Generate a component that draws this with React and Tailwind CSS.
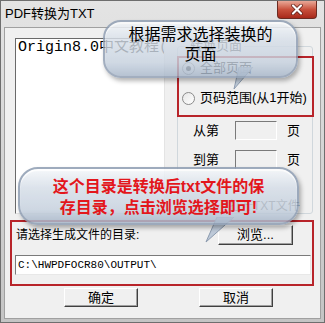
import React from "react";

const font = { fontFamily: '"Liberation Sans", "Noto Sans CJK SC", sans-serif' };

function Radio({ checked }) {
  return (
    <span className="relative w-[13px] h-[13px] rounded-full border border-[#8a8a8a] bg-gradient-to-br from-[#e6e6e6] to-white flex items-center justify-center shrink-0">
      {checked && <span className="w-[5px] h-[5px] rounded-full bg-[#222]" />}
    </span>
  );
}

function Btn({ children, className = "" }) {
  return (
    <div
      className={
        "flex items-center justify-center bg-[#f0f0f0] border border-t-white border-l-white border-b-[#404040] border-r-[#404040] shadow-[inset_-1px_-1px_0_#a0a0a0] text-[13px] text-black " +
        className
      }
    >
      {children}
    </div>
  );
}

export default function App() {
  return (
    <div
      className="relative w-[325px] h-[323px] overflow-hidden border border-[#6e6e6e] bg-gradient-to-b from-[#e4e4e4] via-[#d4d4d4] to-[#c4c4c4]"
      style={font}
    >
      {/* title bar */}
      <div className="h-[26px] flex items-center pl-[4px] text-[13px] text-black">PDF转换为TXT</div>
      <div className="absolute left-[276px] top-0 w-[40px] h-[18px] rounded-b-[4px] border border-t-0 border-[#6b2b22] bg-gradient-to-b from-[#e8a898] via-[#c8503c] to-[#a8281a] flex items-center justify-center">
        <svg width="12" height="11" viewBox="0 0 12 11">
          <path d="M2 1.5 L10 9.5 M10 1.5 L2 9.5" stroke="#5a1a12" strokeWidth="3.6" strokeLinecap="round" />
          <path d="M2 1.5 L10 9.5 M10 1.5 L2 9.5" stroke="#ffffff" strokeWidth="2.2" strokeLinecap="round" />
        </svg>
      </div>

      {/* client area */}
      <div className="mx-[3px] h-[292px] border border-[#a0a0a0] bg-[#f0f0f0] flex flex-col">
        {/* top row */}
        <div className="flex gap-[12px] ml-[10px] mt-[10px]">
          <div className="w-[150px] h-[176px] bg-white border border-t-[#6a6a6a] border-l-[#6a6a6a] border-b-[#e4e4e4] border-r-[#e4e4e4] pl-[2px] pt-[1px]">
            <div className="text-[15px] leading-[16px] text-black whitespace-nowrap overflow-hidden" style={{ fontFamily: '"Liberation Mono", "Noto Sans CJK SC", monospace' }}>
              Origin8.0中文教程(二维绘
            </div>
          </div>
          <div className="relative w-[136px] h-[168px] mt-[8px] border border-[#d0d7dc] rounded-[3px] flex flex-col">
            <div className="absolute left-[10px] top-[-9px] px-[2px] bg-[#f0f0f0] text-[13px] leading-[16px] text-[#222]">转换页面</div>
            <div className="flex items-center gap-[5px] ml-[4px] mt-[13px] h-[16px] text-[13px] text-black">
              <Radio checked />
              <span>全部页面</span>
            </div>
            <div className="flex items-center gap-[5px] ml-[4px] mt-[14px] h-[16px] text-[13px] text-black">
              <Radio />
              <span>页码范围(从1开始)</span>
            </div>
            <div className="flex items-center ml-[15px] mt-[15px] h-[19px] text-[13px] text-black">
              <span className="w-[42px]">从第</span>
              <span className="w-[42px] h-[19px] border border-t-[#7a7a7a] border-l-[#7a7a7a] border-b-white border-r-white" />
              <span className="ml-[10px]">页</span>
            </div>
            <div className="flex items-center ml-[15px] mt-[10px] h-[19px] text-[13px] text-black">
              <span className="w-[42px]">到第</span>
              <span className="w-[42px] h-[19px] border border-t-[#7a7a7a] border-l-[#7a7a7a] border-b-white border-r-white" />
              <span className="ml-[10px]">页</span>
            </div>
            <div className="flex items-center gap-[3px] ml-[35px] mt-[30px] h-[14px] text-[12px] text-[#333]">
              <span className="w-[13px] h-[13px] border border-[#8a8a8a] bg-white shrink-0" />
              <span>打开TXT文件</span>
            </div>
          </div>
        </div>

        {/* output directory section */}
        <div className="ml-[5px] mr-[6px] mt-[6px] h-[66px] border-2 border-[#b8242a] flex flex-col">
          <div className="flex items-center mt-[3px] h-[20px]">
            <span className="ml-[4px] text-[12px] text-black">请选择生成文件的目录:</span>
            <Btn className="ml-auto mr-[19px] w-[75px] h-[20px]">浏览...</Btn>
          </div>
          <div
            className="ml-[3px] mr-[1px] mt-[10px] h-[20px] bg-white border border-t-[#7a7a7a] border-l-[#7a7a7a] border-b-[#e8e8e8] border-r-[#e8e8e8] flex items-center pl-[2px] text-[11px] text-black"
            style={{ fontFamily: '"Liberation Mono", monospace' }}
          >
            C:\HWPDFOCR80\OUTPUT\
          </div>
        </div>

        {/* OK / Cancel */}
        <div className="flex ml-[59px] mt-[2px] gap-[61px]">
          <Btn className="w-[74px] h-[19px]">确定</Btn>
          <Btn className="w-[74px] h-[19px]">取消</Btn>
        </div>
      </div>

      {/* red annotation box around page options */}
      <div className="absolute left-[176px] top-[55px] w-[137px] h-[61px] border-2 border-[#b8242a]" />

      {/* callout 1 */}
      <svg className="absolute left-[226px] top-[66px]" width="30" height="26" viewBox="0 0 30 26">
        <path d="M12 0 L26 0 L7 22 Z" fill="#b9c6d6" stroke="#8494aa" strokeWidth="1" opacity="0.9" />
      </svg>
      <div className="absolute left-[102px] top-[19px] w-[195px] h-[58px] rounded-[18px] border-2 border-[#8e9db2] bg-[linear-gradient(to_bottom,#f4f7fa,#d6dee8_35%,#c6d1de_75%,#a7b6c9)] opacity-[0.82] shadow-[2px_3px_4px_rgba(0,0,0,0.35),inset_0_2px_1px_rgba(255,255,255,0.9)]" />
      <div className="absolute left-[102px] top-[24px] w-[195px] flex flex-col items-center text-[16px] leading-[20px] text-black">
        <span>根据需求选择装换的</span>
        <span>页面</span>
      </div>

      {/* callout 2 */}
      <svg className="absolute left-[200px] top-[216px]" width="36" height="30" viewBox="0 0 36 30">
        <path d="M16 0 L33 0 L5 25 Z" fill="#b9c6d6" stroke="#8494aa" strokeWidth="1" opacity="0.92" />
      </svg>
      <div className="absolute left-[17px] top-[166px] w-[281px] h-[58px] rounded-[20px] border-2 border-[#8e9db2] bg-[linear-gradient(to_bottom,#f4f7fa,#d6dee8_35%,#c6d1de_75%,#a7b6c9)] opacity-[0.85] shadow-[2px_3px_4px_rgba(0,0,0,0.35),inset_0_2px_1px_rgba(255,255,255,0.9)]" />
      <div className="absolute left-[17px] top-[175px] w-[281px] flex flex-col items-center text-[16px] leading-[21px] font-bold text-[#e3161c]">
        <span>这个目录是转换后txt文件的保</span>
        <span>存目录，点击浏览选择即可!</span>
      </div>
    </div>
  );
}
